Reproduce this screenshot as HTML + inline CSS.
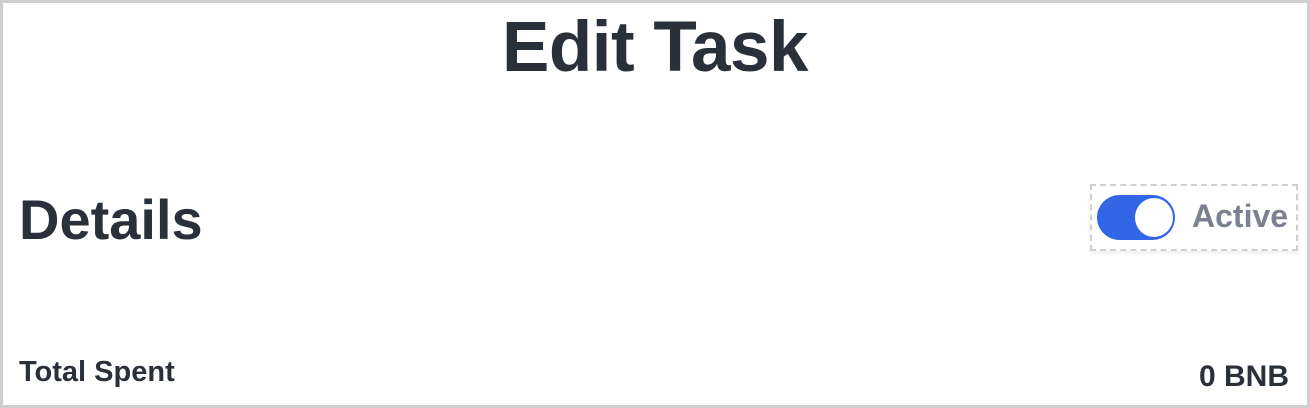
<!DOCTYPE html>
<html><head><style>
html,body{margin:0;padding:0}
body{width:1310px;height:408px;position:relative;background:#fff;font-family:"Liberation Sans",sans-serif;color:#2a303a;overflow:hidden}
.frame{position:absolute;left:0;top:0;width:1304px;height:402px;border:3px solid #cfcfcf;}
.t{position:absolute;font-weight:bold;white-space:nowrap}
</style></head><body>
<div class="frame"></div>
<div class="t" style="left:0;width:1310px;text-align:center;top:7px;font-size:71px;letter-spacing:-0.5px">Edit Task</div>
<div class="t" style="left:19px;top:187px;font-size:56px">Details</div>
<div style="position:absolute;left:1090px;top:184px;width:204px;height:63px;border:2px dashed #cfcfcf;box-shadow:0 2px 4px rgba(0,0,0,0.08)"></div>
<div style="position:absolute;left:1097px;top:195px;width:78px;height:45px;border-radius:23px;background:#3366e6"></div>
<div style="position:absolute;left:1135px;top:198px;width:38px;height:39px;border-radius:50%;background:#fff"></div>
<div class="t" style="left:1192px;top:198px;font-size:32px;color:#7c8190">Active</div>
<div class="t" style="left:19px;top:356px;font-size:29px">Total Spent</div>
<div class="t" style="right:21px;top:360px;font-size:30px">0 BNB</div>
</body></html>
